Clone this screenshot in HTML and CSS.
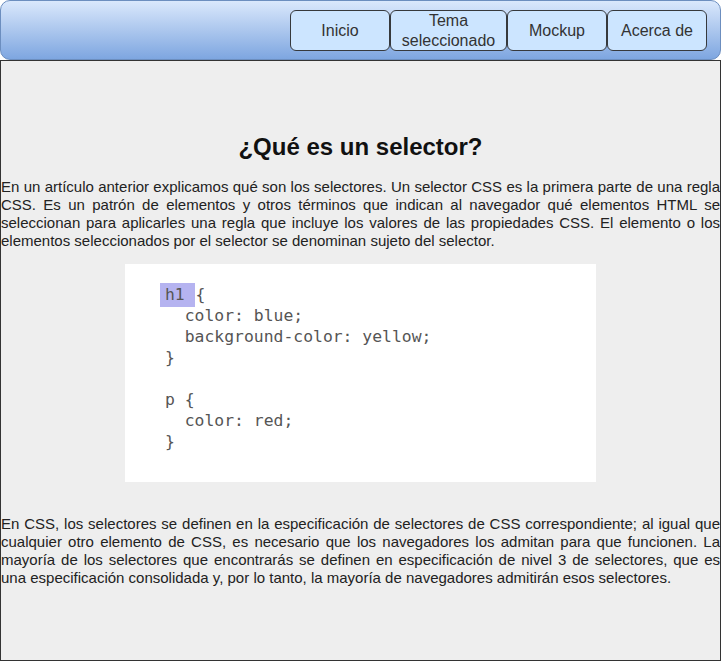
FILE: index.html
```
<!DOCTYPE html>
<html lang="es">
<head>
<meta charset="utf-8">
<title>¿Qué es un selector?</title>
<link rel="stylesheet" href="styles.css">
</head>
<body>
<header class="topbar">
  <nav class="nav">
    <a class="nav-btn w100">Inicio</a>
    <a class="nav-btn w117">Tema<br>seleccionado</a>
    <a class="nav-btn w100">Mockup</a>
    <a class="nav-btn w100">Acerca de</a>
  </nav>
</header>
<main class="content">
  <h1 class="title">¿Qué es un selector?</h1>
  <p class="text">En un artículo anterior explicamos qué son los selectores. Un selector CSS es la primera parte de una regla CSS. Es un patrón de elementos y otros términos que indican al navegador qué elementos HTML se seleccionan para aplicarles una regla que incluye los valores de las propiedades CSS. El elemento o los elementos seleccionados por el selector se denominan sujeto del selector.</p>
  <div class="code"><pre><span class="hl">h1</span>{
  color: blue;
  background-color: yellow;
}

p {
  color: red;
}</pre></div>
  <p class="text second"><span class="jl">En CSS, los selectores se definen en la especificación de selectores de CSS correspondiente; al igual que</span><span class="jl">cualquier otro elemento de CSS, es necesario que los navegadores los admitan para que funcionen. La</span><span class="jl">mayoría de los selectores que encontrarás se definen en especificación de nivel 3 de selectores, que es</span><span class="last">una especificación consolidada y, por lo tanto, la mayoría de navegadores admitirán esos selectores.</span></p>
</main>
</body>
</html>
```
FILE: styles.css
```
html, body {
  margin: 0;
  padding: 0;
  background: #ffffff;
}
body {
  width: 721px;
  height: 661px;
  overflow: hidden;
  font-family: "Liberation Sans", Arial, sans-serif;
  color: #333333;
}
.topbar {
  box-sizing: border-box;
  height: 60px;
  border: 1px solid #6c8ebf;
  border-radius: 10px;
  background: linear-gradient(to bottom, #dae8fc 0%, #7ea6e0 100%);
  display: flex;
  justify-content: flex-end;
  align-items: center;
  padding-right: 13px;
}
.nav {
  display: flex;
  height: 41px;
  margin-top: 1px;
}
.nav-btn {
  box-sizing: border-box;
  height: 41px;
  display: flex;
  align-items: center;
  justify-content: center;
  text-align: center;
  background: #cce5ff;
  border: 1px solid #36393d;
  border-radius: 6px;
  font-size: 16px;
  line-height: 20px;
  color: #333333;
}
.w100 { width: 100px; }
.w117 { width: 117px; }
.content {
  box-sizing: border-box;
  height: 601px;
  border: 1px solid #333333;
  background: #eeeeee;
  padding: 72px 0 0 0;
}
.title {
  margin: 0;
  text-align: center;
  font-size: 24px;
  line-height: 28px;
  font-weight: bold;
  color: #111111;
}
.text {
  margin: 17px 0 0 0;
  font-size: 15px;
  line-height: 18px;
  text-align: justify;
  color: #222222;
}
.second {
  margin-top: 33px;
}
.jl {
  display: block;
  white-space: nowrap;
  text-align: justify;
  text-align-last: justify;
}
.last {
  display: block;
  white-space: nowrap;
}
.code {
  box-sizing: border-box;
  width: 471px;
  height: 218px;
  margin: 14px auto 0 auto;
  background: #ffffff;
  padding: 20px 0 0 35px;
}
.code pre {
  margin: 0;
  font-family: "DejaVu Sans Mono", "Liberation Mono", monospace;
  font-size: 16.4px;
  line-height: 21px;
  padding-left: 5px;
  color: #555555;
}
.hl {
  background: #b5b3f0;
  padding: 2px 1ch 3px 0;
  margin-right: 1px;
  box-shadow: -5px 0 0 #b5b3f0;
}
```
